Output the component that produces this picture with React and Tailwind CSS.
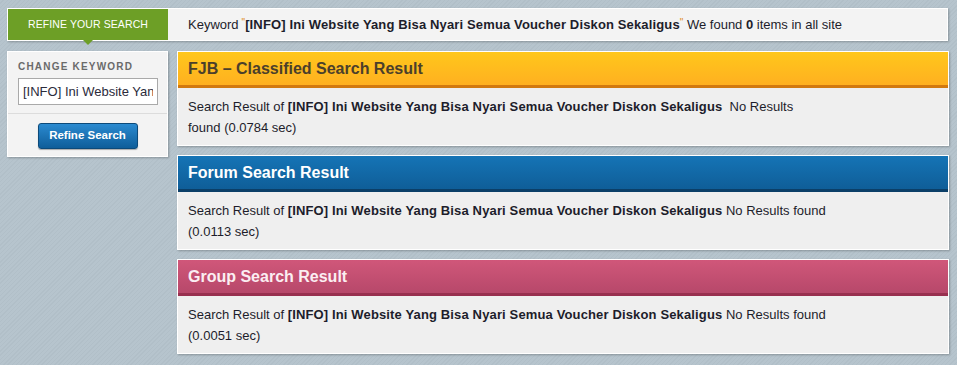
import React from 'react';

const KEYWORD = '[INFO] Ini Website Yang Bisa Nyari Semua Voucher Diskon Sekaligus';

const HEADS = {
  orange: 'bg-gradient-to-b from-[#ffc71b] to-[#ffb020] border-b-[3px] border-[#d2790f] text-[#4b3f2b]',
  blue: 'bg-gradient-to-b from-[#1574b6] to-[#0f5e98] border-b-[3px] border-[#0b3f68] text-white',
  pink: 'bg-gradient-to-b from-[#d0577a] to-[#b7486a] border-b-[3px] border-[#98304f] text-[#fbeef2]',
};

const Kw = () => <b className="tracking-[0.14px]">{KEYWORD}</b>;

function ResultCard({ title, tone, children }) {
  return (
    <div className="border border-white bg-[#efefef] shadow-[1px_1px_2px_rgba(0,0,0,0.25)]">
      <div className={`h-[36px] px-[10px] flex items-center text-[16px] font-bold ${HEADS[tone]}`}>
        {title}
      </div>
      <div className="px-[10px] pt-[8px] pb-[7px] text-[13px] leading-[21px] text-[#1d1d2b]">
        {children}
      </div>
    </div>
  );
}

export default function App() {
  return (
    <div
      className="min-h-screen w-full bg-[#b4c2cb] bg-[repeating-linear-gradient(135deg,#b6c4cd_0px,#b6c4cd_2px,#b1bfc8_2px,#b1bfc8_3px)] pt-[8px] pl-[7px]"
      style={{ fontFamily: '"Liberation Sans", Arial, sans-serif' }}
    >
      {/* top bar */}
      <div className="w-[941px] h-[33px] flex border border-white bg-[#f3f3f3] shadow-[1px_1px_2px_rgba(0,0,0,0.25)]">
        <div className="relative w-[160px] bg-[#6d9f26] flex items-center justify-center text-white text-[10.5px] tracking-[0.1px]">
          REFINE YOUR SEARCH
          <span className="absolute left-[75px] -bottom-[5px] w-0 h-0 border-l-[5px] border-r-[5px] border-t-[5px] border-l-transparent border-r-transparent border-t-[#6d9f26]" />
        </div>
        <div className="pl-[20px] flex items-center text-[13px] text-[#1d1d2b] whitespace-nowrap">
          Keyword <span className="text-[#e08a1a] text-[10px] -mt-[4px] ml-[3px]">"</span>
          <Kw />
          <span className="text-[#e08a1a] text-[10px] -mt-[4px]">"</span>&nbsp;We found&nbsp;<b>0</b>&nbsp;items in all site
        </div>
      </div>

      <div className="mt-[10px] flex gap-[9px] items-start">
        {/* left column */}
        <div className="w-[161px] border border-white bg-[#f3f3f3] shadow-[1px_1px_2px_rgba(0,0,0,0.25)]">
          <div className="px-[10px] pt-[8px] pb-[8px]">
            <div className="text-[10px] font-bold tracking-[1.2px] text-[#6a6a6a] leading-[14px]">CHANGE KEYWORD</div>
            <input
              readOnly
              value={KEYWORD}
              className="mt-[4px] h-[27px] w-[140px] border border-[#a9a9a9] bg-white px-[4px] text-[13px] text-[#2b2b3b] outline-none"
              style={{ fontFamily: '"Liberation Sans", Arial, sans-serif' }}
            />
          </div>
          <div className="border-t border-[#dcdcdc] flex justify-center pt-[9px] pb-[7px]">
            <button className="w-[100px] h-[26px] rounded-[3px] border border-[#0c4a7a] bg-gradient-to-b from-[#2a8ad0] to-[#0f5e9a] text-white text-[11.5px] font-bold shadow-[0_1px_1px_rgba(0,0,0,0.3)]">
              Refine Search
            </button>
          </div>
        </div>

        {/* results */}
        <div className="w-[772px] flex flex-col gap-[9px]">
          <ResultCard title="FJB – Classified Search Result" tone="orange">
            Search Result of <Kw />&nbsp; No Results<br />found (0.0784 sec)
          </ResultCard>
          <ResultCard title="Forum Search Result" tone="blue">
            Search Result of <Kw /> No Results found<br />(0.0113 sec)
          </ResultCard>
          <ResultCard title="Group Search Result" tone="pink">
            Search Result of <Kw /> No Results found<br />(0.0051 sec)
          </ResultCard>
        </div>
      </div>
    </div>
  );
}
